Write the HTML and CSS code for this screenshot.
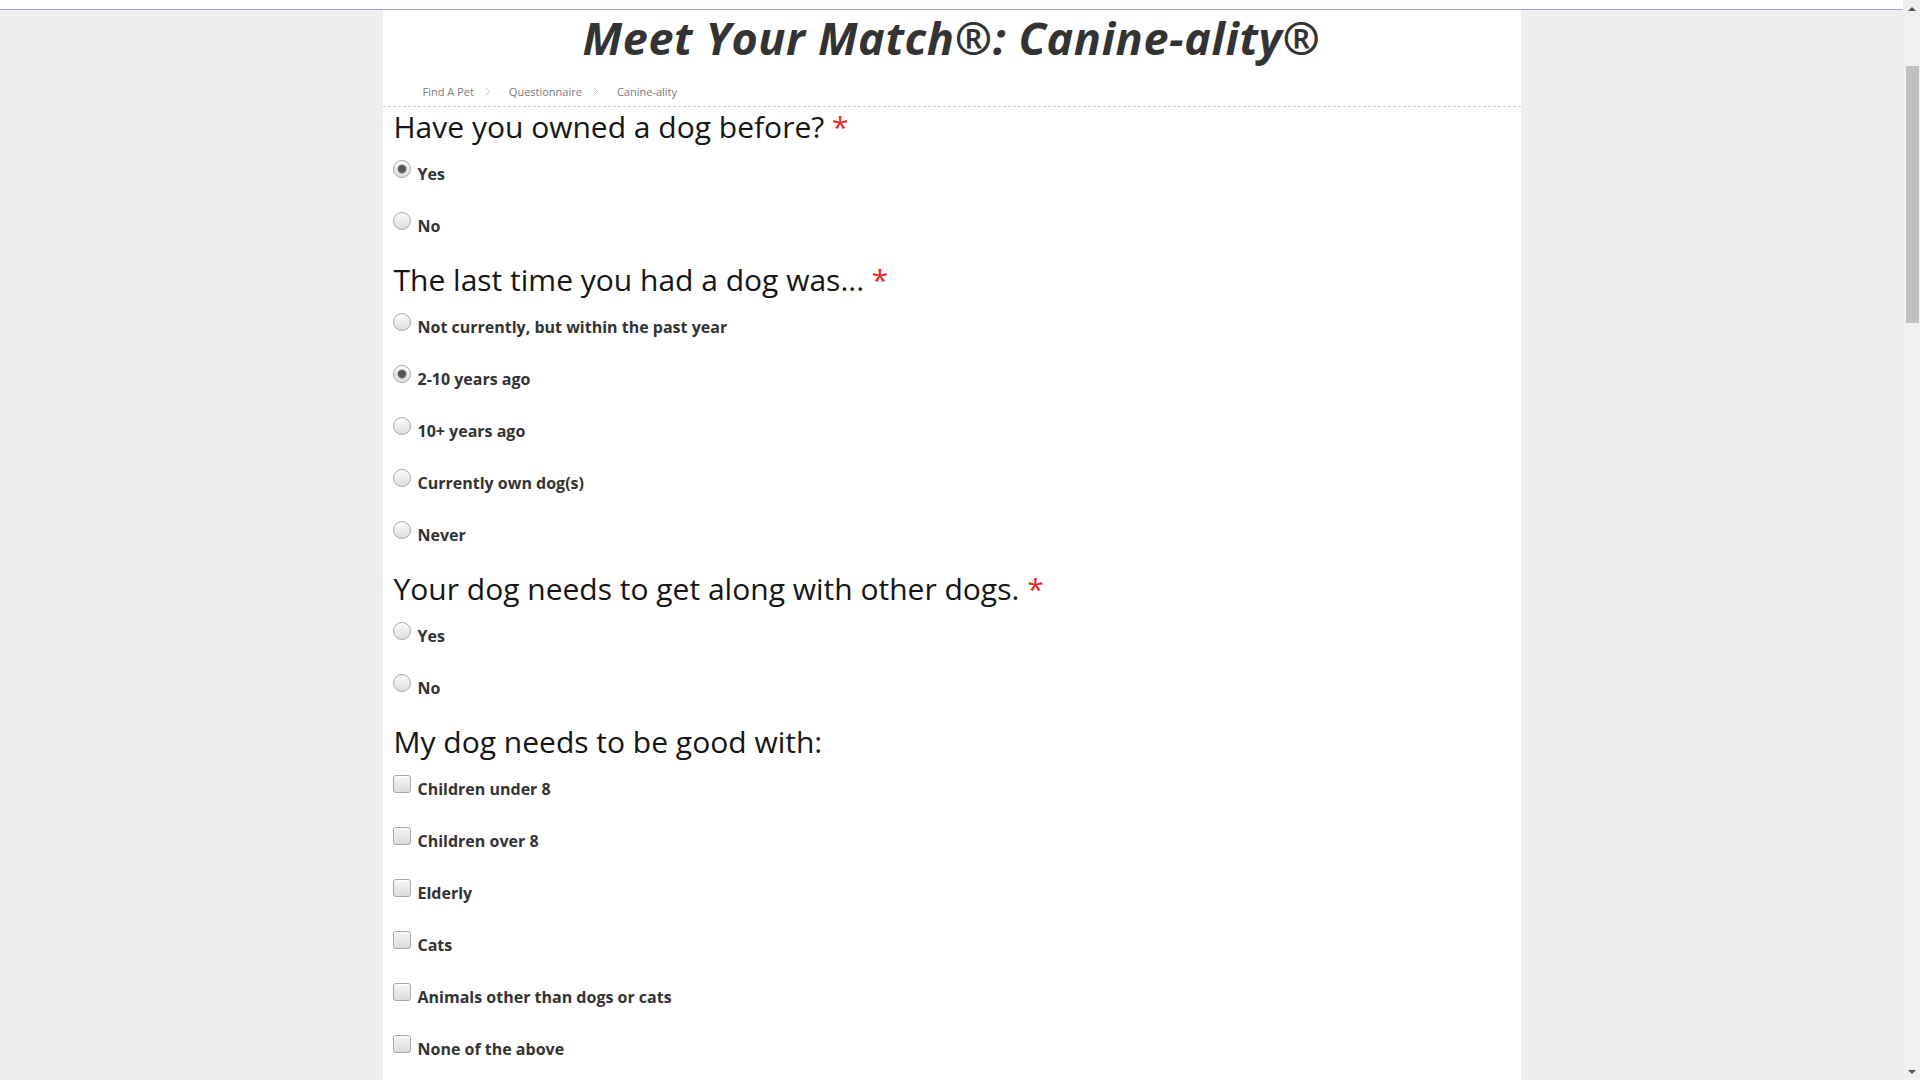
FILE: index.html
```html
<!DOCTYPE html>
<html lang="en">
<head>
<meta charset="utf-8">
<title>Meet Your Match: Canine-ality</title>
<link rel="stylesheet" href="styles.css">
</head>
<body>
<div class="window">
  <div class="viewport">
    <div class="topstrip"></div>
    <div class="page">
      <main class="panel">
        <h1 class="title">Meet Your Match®: Canine-ality®</h1>
        <nav class="crumbs">
          <span class="crumb">Find A Pet</span>
          <svg class="chev" width="5" height="9" viewBox="0 0 5 9"><path d="M0.5 0.5 L4.5 4.5 L0.5 8.5" fill="none" stroke="#c4c4c4" stroke-width="1"/></svg>
          <span class="crumb">Questionnaire</span>
          <svg class="chev" width="5" height="9" viewBox="0 0 5 9"><path d="M0.5 0.5 L4.5 4.5 L0.5 8.5" fill="none" stroke="#c4c4c4" stroke-width="1"/></svg>
          <span class="crumb">Canine-ality</span>
        </nav>
        <form class="quiz">
          <fieldset class="question">
            <h2 class="q-title">Have you owned a dog before? <span class="req">*</span></h2>
            <div class="options">
              <label class="opt"><input type="radio" name="owned" checked><span class="opt-text">Yes</span></label>
              <label class="opt"><input type="radio" name="owned"><span class="opt-text">No</span></label>
            </div>
          </fieldset>
          <fieldset class="question">
            <h2 class="q-title">The last time you had a dog was... <span class="req">*</span></h2>
            <div class="options">
              <label class="opt"><input type="radio" name="last"><span class="opt-text">Not currently, but within the past year</span></label>
              <label class="opt"><input type="radio" name="last" checked><span class="opt-text">2-10 years ago</span></label>
              <label class="opt"><input type="radio" name="last"><span class="opt-text">10+ years ago</span></label>
              <label class="opt"><input type="radio" name="last"><span class="opt-text">Currently own dog(s)</span></label>
              <label class="opt"><input type="radio" name="last"><span class="opt-text">Never</span></label>
            </div>
          </fieldset>
          <fieldset class="question">
            <h2 class="q-title">Your dog needs to get along with other dogs. <span class="req">*</span></h2>
            <div class="options">
              <label class="opt"><input type="radio" name="dogs"><span class="opt-text">Yes</span></label>
              <label class="opt"><input type="radio" name="dogs"><span class="opt-text">No</span></label>
            </div>
          </fieldset>
          <fieldset class="question">
            <h2 class="q-title">My dog needs to be good with:</h2>
            <div class="options">
              <label class="opt"><input type="checkbox"><span class="opt-text">Children under 8</span></label>
              <label class="opt"><input type="checkbox"><span class="opt-text">Children over 8</span></label>
              <label class="opt"><input type="checkbox"><span class="opt-text">Elderly</span></label>
              <label class="opt"><input type="checkbox"><span class="opt-text">Cats</span></label>
              <label class="opt"><input type="checkbox"><span class="opt-text">Animals other than dogs or cats</span></label>
              <label class="opt"><input type="checkbox"><span class="opt-text">None of the above</span></label>
            </div>
          </fieldset>
        </form>
      </main>
    </div>
  </div>
  <div class="scrollbar">
    <div class="sb-arrow sb-up"></div>
    <div class="sb-track"><div class="sb-thumb"></div></div>
    <div class="sb-arrow sb-down"></div>
  </div>
</div>
</body>
</html>
```
FILE: styles.css
```css
* { box-sizing: border-box; }
html, body {
  margin: 0;
  padding: 0;
  height: 1080px;
  overflow: hidden;
  background: #efefef;
  font-family: "Open Sans", "Noto Sans", sans-serif;
}
.window {
  display: flex;
  height: 1080px;
}
.viewport {
  flex: 1;
  display: flex;
  flex-direction: column;
  min-width: 0;
}
.topstrip {
  height: 10px;
  background: #ffffff;
  border-bottom: 1px solid #9eafbf;
  flex: none;
}
.page {
  flex: 1;
  background: #efefef;
}
.panel {
  width: 1138px;
  margin: 0 auto;
  background: #ffffff;
  min-height: 100%;
}
.title {
  margin: 0;
  font-size: 45px;
  line-height: 56px;
  font-weight: 700;
  font-style: italic;
  color: #333333;
  text-align: center;
  letter-spacing: 0.6px;
}
.crumbs {
  display: flex;
  align-items: center;
  padding: 16px 0 5px 40px;
  height: 41px;
  border-bottom: 1px dashed #cfcfcf;
  font-size: 11px;
  line-height: 20px;
  color: #7a7a7a;
}
.chev {
  margin: 0 19px 0 11px;
  display: block;
}
.quiz {
  padding: 2px 0 0 10px;
}
.question {
  border: 0;
  margin: 0 0 26px 0;
  padding: 0;
}
.q-title {
  margin: 0 0 15px 1px;
  font-size: 30px;
  line-height: 36px;
  font-weight: 400;
  color: #151515;
}
.req {
  color: #e8281c;
}
.options {
  display: flex;
  flex-direction: column;
  gap: 28px;
}
.opt {
  display: flex;
  align-items: flex-start;
  height: 24px;
}
.opt input {
  -webkit-appearance: none;
  appearance: none;
  margin: 0 7px 0 0;
  width: 18px;
  height: 18px;
  flex: none;
  border: 1px solid #a7a7a7;
  background: linear-gradient(#fbfbfb, #dedede);
  box-shadow: inset 0 1px 1px rgba(255,255,255,0.8);
}
.opt input[type="radio"] {
  border-radius: 50%;
}
.opt input[type="radio"]:checked {
  background: radial-gradient(circle at 50% 50%, #555555 0, #555555 3.2px, #8a8a8a 4.2px, rgba(0,0,0,0) 5px), linear-gradient(#fbfbfb, #dedede);
}
.opt input[type="checkbox"] {
  border-radius: 3px;
  background: linear-gradient(#f6f6f6, #dcdcdc);
}
.opt-text {
  padding-top: 2px;
  font-size: 16px;
  line-height: 24px;
  font-weight: 700;
  color: #333333;
}
.scrollbar {
  width: 17px;
  flex: none;
  display: flex;
  flex-direction: column;
  background: #f0f0f0;
}
.sb-arrow {
  height: 17px;
  flex: none;
  display: flex;
  justify-content: center;
}
.sb-up {
  align-items: center;
}
.sb-up::before {
  content: "";
  border-left: 4px solid transparent;
  border-right: 4px solid transparent;
  border-bottom: 4px solid #505050;
}
.sb-down {
  align-items: center;
}
.sb-down::before {
  content: "";
  border-left: 4px solid transparent;
  border-right: 4px solid transparent;
  border-top: 4px solid #505050;
}
.sb-track {
  flex: 1;
  padding: 49px 1px 0 3px;
}
.sb-thumb {
  height: 257px;
  background: #c1c1c1;
}
```
